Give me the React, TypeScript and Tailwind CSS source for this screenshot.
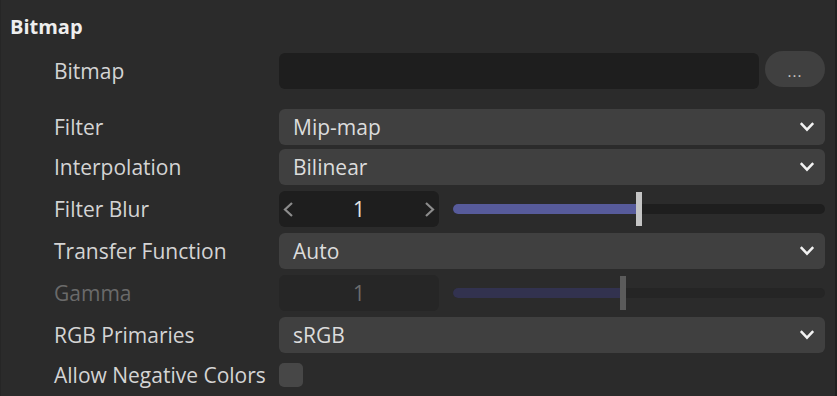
import React from "react";

function Chevron() {
  return (
    <svg width="16" height="12" viewBox="0 0 16 12" className="shrink-0">
      <path d="M1.8 2.2 L8 8.6 L14.2 2.2" fill="none" stroke="#f2f2f2" strokeWidth="2.5" />
    </svg>
  );
}

function Dropdown({ value }: { value: string }) {
  return (
    <div className="flex h-[36px] flex-1 items-center justify-between rounded-[6px] bg-[#404040] pl-[14px] pr-[10px] text-[21px] text-[#dcdcdc]">
      <span>{value}</span>
      <Chevron />
    </div>
  );
}

function NumberField({ value, disabled }: { value: string; disabled?: boolean }) {
  return (
    <div
      className={`flex h-[36px] w-[160px] shrink-0 items-center justify-between rounded-[6px] px-[4px] text-[21px] ${
        disabled ? "bg-[#262626] text-[#6c6c6c]" : "bg-[#1e1e1e] text-[#e4e4e4]"
      }`}
    >
      {disabled ? (
        <span className="w-[11px]" />
      ) : (
        <svg width="11" height="15" viewBox="0 0 11 15">
          <path d="M9 1 L2 7.5 L9 14" fill="none" stroke="#8c8c8c" strokeWidth="2.2" />
        </svg>
      )}
      <span>{value}</span>
      {disabled ? (
        <span className="w-[11px]" />
      ) : (
        <svg width="11" height="15" viewBox="0 0 11 15">
          <path d="M2 1 L9 7.5 L2 14" fill="none" stroke="#8c8c8c" strokeWidth="2.2" />
        </svg>
      )}
    </div>
  );
}

function Slider({ fill, disabled }: { fill: number; disabled?: boolean }) {
  return (
    <div className="ml-[14px] flex h-[36px] flex-1 items-center">
      <div className={`relative h-[10px] w-full rounded-[5px] ${disabled ? "bg-[#252525]" : "bg-[#1e1e1e]"}`}>
        <div
          className={`h-full rounded-l-[5px] ${disabled ? "bg-[#32324f]" : "bg-[#575b9b]"}`}
          style={{ width: fill }}
        />
        <div
          className={`absolute top-[-12px] h-[34px] w-[6px] ${disabled ? "bg-[#5b5b5b]" : "bg-[#c4c4c4]"}`}
          style={{ left: fill }}
        />
      </div>
    </div>
  );
}

function Label({ children, disabled }: { children: React.ReactNode; disabled?: boolean }) {
  return (
    <div className={`w-[225px] shrink-0 text-[21px] ${disabled ? "text-[#6a6a6a]" : "text-[#d4d4d4]"}`}>
      {children}
    </div>
  );
}

export default function App() {
  return (
    <div className="flex h-[396px] w-[837px] flex-col overflow-hidden border-l border-r-2 border-l-[#262626] border-r-[#202020] bg-[#2b2b2b] font-['Open_Sans',sans-serif] leading-none">
      <div className="mt-[13px] pl-[9px] text-[20px] font-bold leading-[28px] text-[#eeeeee]">Bitmap</div>

      <div className="flex flex-col pl-[53px] pr-[10px]">
        <div className="mt-[10px] flex h-[38px] items-center">
          <div className="pt-[2px]">
            <Label>Bitmap</Label>
          </div>
          <div className="h-[36px] flex-1 self-end rounded-[6px] bg-[#1e1e1e]" />
          <div className="ml-[6px] flex h-[36px] w-[60px] items-center justify-center self-start rounded-full bg-[#404040] pt-[5px] text-[15px] tracking-[1px] text-[#c8c8c8]">
            ...
          </div>
        </div>

        <div className="mt-[20px] flex h-[36px] items-center">
          <Label>Filter</Label>
          <Dropdown value="Mip-map" />
        </div>

        <div className="mt-[4px] flex h-[36px] items-center">
          <Label>Interpolation</Label>
          <Dropdown value="Bilinear" />
        </div>

        <div className="mt-[6px] flex h-[36px] items-center">
          <Label>Filter Blur</Label>
          <NumberField value="1" />
          <Slider fill={183} />
        </div>

        <div className="mt-[6px] flex h-[36px] items-center">
          <Label>Transfer Function</Label>
          <Dropdown value="Auto" />
        </div>

        <div className="mt-[6px] flex h-[36px] items-center">
          <Label disabled>Gamma</Label>
          <NumberField value="1" disabled />
          <Slider fill={167} disabled />
        </div>

        <div className="mt-[6px] flex h-[36px] items-center">
          <Label>RGB Primaries</Label>
          <Dropdown value="sRGB" />
        </div>

        <div className="mt-[10px] flex h-[24px] items-center">
          <Label>Allow Negative Colors</Label>
          <div className="h-[24px] w-[24px] rounded-[5px] bg-[#474747]" />
        </div>
      </div>
    </div>
  );
}
